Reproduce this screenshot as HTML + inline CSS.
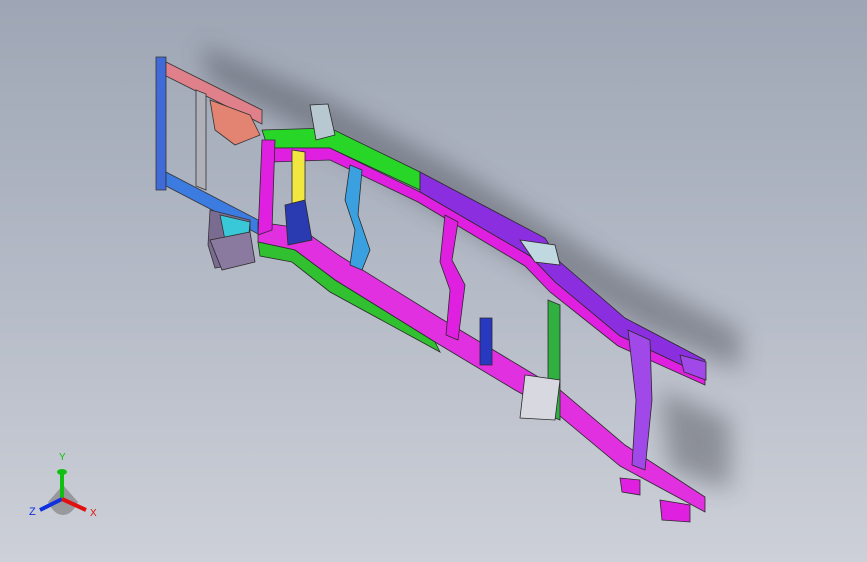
<!DOCTYPE html>
<html><head><style>
html,body{margin:0;padding:0}
body{width:867px;height:562px;overflow:hidden;background:linear-gradient(180deg,#9ea6b5 0%,#b4bac6 50%,#cdd0d8 100%);position:relative;font-family:"Liberation Sans",sans-serif}
svg{position:absolute;left:0;top:0}
</style></head><body>
<svg width="867" height="562" viewBox="0 0 867 562">
<defs>
<filter id="b" x="-20%" y="-20%" width="140%" height="140%"><feGaussianBlur stdDeviation="12"/></filter>
</defs>
<g filter="url(#b)" fill="#3a3d45" opacity="0.4">
<polygon points="200,45 320,95 460,170 620,270 740,330 740,370 640,330 470,230 320,140 210,80"/>
<polygon points="660,390 730,420 730,490 670,470"/>
</g>
<g stroke="#333" stroke-width="0.8">
<polygon points="156,57 166,57 166,190 156,190" fill="#3f6ad8"/>
<polygon points="166,62 262,110 262,124 166,76" fill="#e0808a"/>
<polygon points="166,172 262,222 262,236 166,186" fill="#3c7be0"/>
<polygon points="196,90 206,94 206,190 196,186" fill="#b0b0b8"/>
<polygon points="210,100 250,115 260,135 235,145 215,130" fill="#e38472"/>
<polygon points="210,210 250,220 250,262 215,268 208,245" fill="#7a6b90"/>
<polygon points="220,215 250,222 248,245 225,240" fill="#39c8d8"/>
</g>
<g stroke="#2a2a2a" stroke-width="0.8">
<polygon points="262,130 330,128 420,172 420,190 330,148 268,148" fill="#28d628"/>
<polygon points="420,172 545,238 560,262 625,318 705,360 705,376 620,336 555,282 530,256 420,192" fill="#8a2ee0"/>
<polygon points="268,148 330,148 420,192 530,256 555,282 620,336 705,376 705,385 618,346 550,292 525,266 418,202 330,160 272,162" fill="#e020e0"/>
<polygon points="258,222 300,228 340,256 440,318 520,366 560,390 625,445 705,497 705,512 620,466 555,412 515,390 435,342 335,280 295,250 258,242" fill="#e030e0"/>
<polygon points="258,242 295,250 335,280 435,342 440,352 330,292 292,262 260,256" fill="#30c030"/>
<polygon points="262,140 275,140 272,230 258,235" fill="#e020e0"/>
<polygon points="292,150 305,152 305,205 292,203" fill="#f2e640"/>
<polygon points="285,205 305,200 312,240 288,245" fill="#2a3ab0"/>
<polygon points="350,165 362,170 358,215 370,250 362,270 350,265 355,230 345,200" fill="#3aa0e0"/>
<polygon points="445,215 458,222 452,260 465,285 458,340 446,335 450,290 440,262" fill="#e020e0"/>
<polygon points="480,318 492,318 492,365 480,365" fill="#2838c0"/>
<polygon points="548,300 560,305 560,420 548,415" fill="#30b040"/>
<polygon points="628,330 650,340 652,400 645,470 632,465 636,400" fill="#a048e8"/>
<polygon points="310,105 328,104 335,135 316,140" fill="#b8c8d0"/>
<polygon points="520,240 555,245 560,265 535,262" fill="#c0d8e0"/>
<polygon points="525,375 560,380 555,420 520,418" fill="#d8d8e0"/>
<polygon points="210,240 250,232 255,262 222,270" fill="#8a7aa0"/>
<polygon points="660,500 690,505 690,522 662,520" fill="#e020e0"/>
<polygon points="620,478 640,480 640,495 622,492" fill="#e020e0"/>
<polygon points="680,355 706,362 706,380 684,372" fill="#a048e8"/>
</g>
<g>
<path d="M63 485 L78 502 Q72 515 63 515 Q54 515 48 502 Z" fill="#707070" opacity="0.55"/>
<line x1="62" y1="498" x2="62" y2="474" stroke="#10c010" stroke-width="4"/>
<ellipse cx="62" cy="472" rx="5" ry="3" fill="#10c010"/>
<line x1="62" y1="499" x2="40" y2="510" stroke="#1030e0" stroke-width="4"/>
<line x1="62" y1="499" x2="86" y2="510" stroke="#e01010" stroke-width="4"/>
<text x="59" y="460" font-size="10" fill="#10c010">Y</text>
<text x="29" y="515" font-size="11" fill="#1030e0">Z</text>
<text x="90" y="516" font-size="10" fill="#e01010">X</text>
</g>
</svg>
</body></html>
